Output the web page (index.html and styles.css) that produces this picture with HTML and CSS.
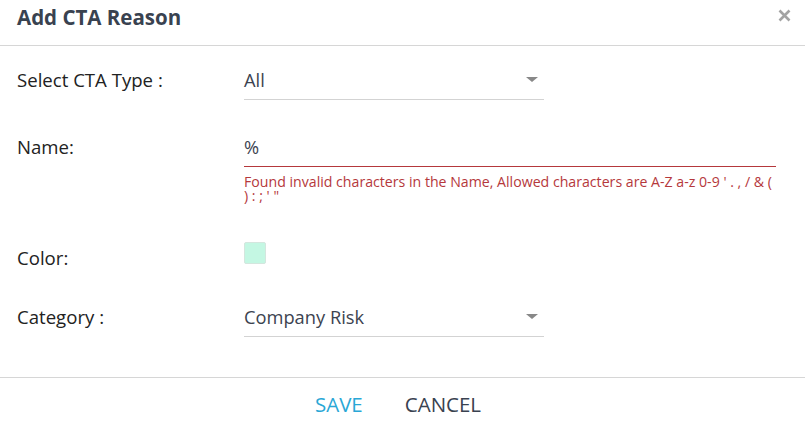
FILE: index.html
```html
<!DOCTYPE html>
<html>
<head>
<meta charset="utf-8">
<link rel="stylesheet" href="styles.css">
</head>
<body>
<div class="dialog">
  <div class="header">
    <h1 class="title">Add CTA Reason</h1>
    <span class="close" aria-label="close">
      <svg width="13" height="13" viewBox="0 0 13 13"><path d="M1.5 1.5 L11.5 11.5 M11.5 1.5 L1.5 11.5" stroke="#a3a3a3" stroke-width="2.6" stroke-linecap="butt"/></svg>
    </span>
  </div>
  <div class="form">
    <div class="row row-type">
      <div class="label">Select CTA Type :</div>
      <div class="field select"><span class="value">All</span><span class="caret"></span></div>
    </div>
    <div class="row row-name">
      <div class="label">Name:</div>
      <div class="control wide">
        <div class="field error-field"><span class="value">%</span></div>
        <div class="error">Found invalid characters in the Name, Allowed characters are A-Z a-z 0-9 ' . , / &amp; ( ) : ; ' "</div>
      </div>
    </div>
    <div class="row row-color">
      <div class="label">Color:</div>
      <div class="swatch"></div>
    </div>
    <div class="row row-cat">
      <div class="label">Category :</div>
      <div class="field select"><span class="value">Company Risk</span><span class="caret"></span></div>
    </div>
  </div>
  <div class="footer">
    <button class="btn save">SAVE</button>
    <button class="btn cancel">CANCEL</button>
  </div>
</div>
</body>
</html>
```
FILE: styles.css
```css
html, body { margin: 0; padding: 0; background: #fff; }
body { font-family: "Open Sans", "Lato", sans-serif; color: #222; width: 805px; height: 427px; overflow: hidden; }
.dialog { width: 805px; }
.header { height: 45px; border-bottom: 1px solid #d6d6d6; display: flex; align-items: center; justify-content: space-between; padding: 0 14px 0 17px; }
.title { margin: 0; font-size: 20.5px; font-weight: 700; color: #394250; position: relative; top: -6px; }
.close { display: flex; position: relative; top: -7px; }
.form { padding: 15px 29px 0 17px; }
.row { display: flex; align-items: flex-start; }
.label { width: 227px; flex: none; font-size: 18.6px; line-height: 38px; color: #222; }
.field { height: 38px; border-bottom: 1px solid #d3d3d3; display: flex; align-items: center; justify-content: space-between; font-size: 18.3px; color: #3c4350; }
.select { width: 300px; }
.wide { flex: 1; min-width: 0; }
.error-field { border-bottom-color: #b5383c; }
.value { line-height: 38px; }
.caret { width: 0; height: 0; border-left: 6px solid transparent; border-right: 6px solid transparent; border-top: 5px solid #888; margin-right: 6px; position: relative; top: -1px; }
.error { margin-top: 8px; font-size: 14.15px; line-height: 14px; color: #b5383c; }
.row-name { margin-top: 28px; }
.row-color { margin-top: 36px; }
.swatch { width: 20px; height: 20px; margin-top: 3px; background: #c4f7e3; border: 1px solid #d4e6de; border-radius: 2px; }
.row-cat { margin-top: 21px; }
.footer { margin-top: 40px; border-top: 1px solid #d6d6d6; height: 50px; display: flex; justify-content: center; align-items: center; gap: 42px; padding-right: 9px; }
.btn { background: none; border: none; padding: 0; font-family: inherit; font-size: 20.5px; position: relative; top: 1px; }
.save { color: #29a7d6; }
.cancel { color: #394250; }
```
